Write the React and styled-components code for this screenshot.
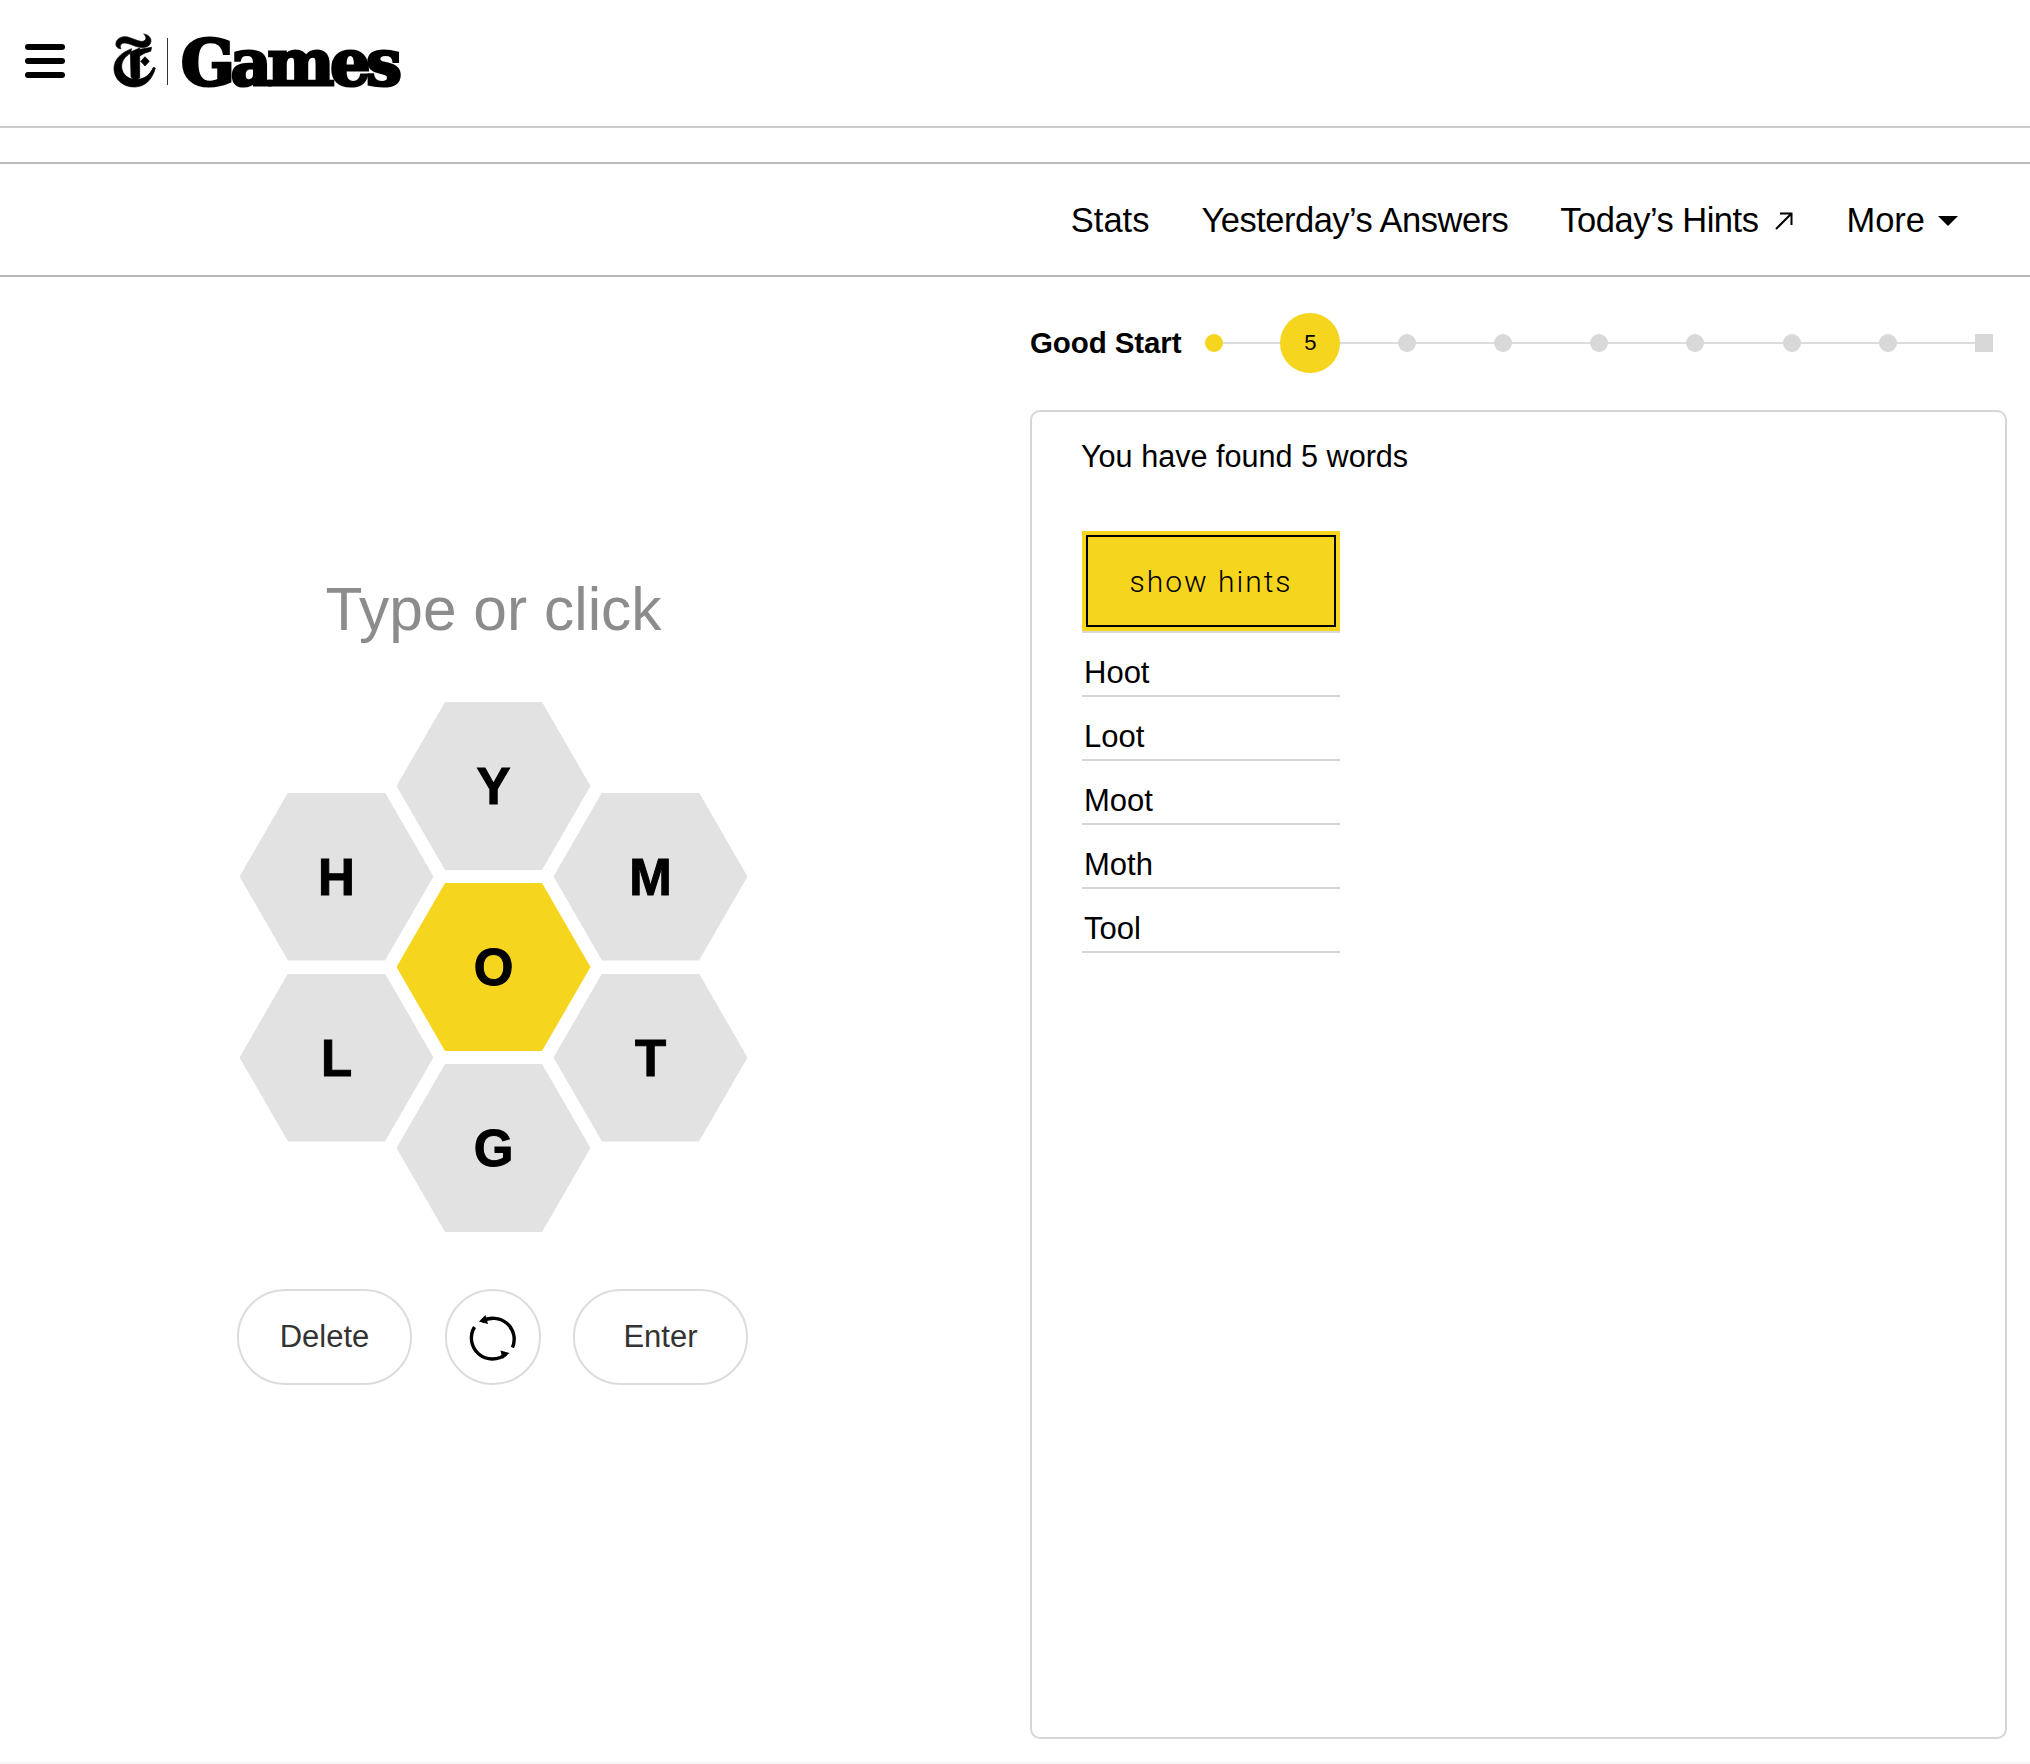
import React from 'react';
import styled, { createGlobalStyle } from 'styled-components';

const Global = createGlobalStyle`
  html, body { margin: 0; padding: 0; background: #fff; overflow: hidden; }
  * { box-sizing: border-box; }
  body { font-family: "Liberation Sans", Arial, sans-serif; color: #000; }
`;
const YELLOW = '#f6d51f';
const Page = styled.div`width: 2030px; height: 1764px; display: flex; flex-direction: column;`;
const Header = styled.header`
  height: 128px; border-bottom: 2px solid #ccc; display: flex; align-items: flex-start;
  padding: 28px 0 0 25px;
`;
const Logo = styled.svg`margin-left: 40px; flex: none;`;
const Menu = styled.svg`flex: none;`;
const Wordmark = styled.span`
  margin-left: 11px; font-family: "DejaVu Serif", serif; font-weight: 700; font-size: 63px; line-height: 65px;
  letter-spacing: -4px; -webkit-text-stroke: 3.2px #000; position: relative; top: 3px;
`;
const SubBar = styled.div`height: 36px; border-bottom: 2px solid #bbb;`;
const Nav = styled.nav`
  height: 113px; border-bottom: 2px solid #b8b8b8; display: flex; justify-content: flex-end; align-items: center;
  gap: 52px; padding: 2px 72px 0 0; font-size: 34.5px;
`;
const NavItem = styled.a`
  display: flex; align-items: center; gap: ${p => p.$gap || 0}px; color: #000; white-space: nowrap;
  letter-spacing: ${p => (p.$tight ? '-0.5px' : '0')};
  margin-left: ${p => p.$push || 0}px;
`;
const Main = styled.main`flex: 1; display: flex; min-height: 0;`;
const GameCol = styled.section`width: 987px; flex: none; display: flex; flex-direction: column; align-items: center; padding-top: 297px;`;
const Title = styled.div`font-size: 60.5px; line-height: 70px; color: #8c8c8c; margin-bottom: 58px;`;
const Hive = styled.div`display: flex; align-items: flex-start;`;
const HiveCol = styled.div`
  display: flex; flex-direction: column; gap: 13px; width: 194px; flex: none;
  padding-top: ${p => p.$offset || 0}px;
  & + & { margin-left: -37px; }
`;
const Hex = styled.div`
  width: 194px; height: 168px; display: flex; align-items: center; justify-content: center; padding-top: 1px;
  clip-path: polygon(25% 0, 75% 0, 100% 50%, 75% 100%, 25% 100%, 0 50%);
  background: ${p => (p.$center ? YELLOW : '#e2e2e2')}; font-weight: 700; font-size: 51px; line-height: 1;
  -webkit-text-stroke: 1px #000;
`;
const Controls = styled.div`display: flex; gap: 32.5px; margin-top: 57px; position: relative; left: -1px;`;
const RoundButton = styled.button`
  height: 96px; width: ${p => p.$w}px; border: 2px solid #dcdcdc; border-radius: 48px; background: #fff;
  display: flex; align-items: center; justify-content: center; padding: 0;
  font: 31px "Liberation Sans", Arial, sans-serif; color: #333;
`;
const ShuffleSvg = styled.svg`margin-left: 2px;`;
const SideCol = styled.section`width: 977px; margin-left: 43px; flex: none; padding-top: 36px; display: flex; flex-direction: column;`;
const Progress = styled.div`height: 60px; display: flex; align-items: center;`;
const Rank = styled.div`width: 175px; flex: none; font-weight: 700; font-size: 29.5px; white-space: nowrap; letter-spacing: -0.1px;`;
const Track = styled.div`
  position: relative; width: 788px; display: flex; justify-content: space-between; align-items: center; height: 60px;
  &::before { content: ''; position: absolute; left: 9px; right: 9px; top: 29px; height: 2px; background: #dcdcdc; }
`;
const Step = styled.div`width: 18px; display: flex; justify-content: center; position: relative;`;
const Dot = styled.span`
  width: 18px; height: 18px; flex: none; background: ${p => (p.$on ? YELLOW : '#d8d8d8')};
  border-radius: ${p => (p.$square ? 0 : '50%')};
`;
const Current = styled.span`
  width: 60px; height: 60px; flex: none; border-radius: 50%; background: ${YELLOW};
  display: flex; align-items: center; justify-content: center; font-size: 22px;
`;
const Panel = styled.div`
  margin-top: 37px; height: 1329px; border: 2px solid #d6d6d6; border-radius: 10px; padding: 26px 0 0 50px;
`;
const Found = styled.div`font-size: 30.6px; line-height: 36px; margin: 0 0 57px -1px;`;
const HintButton = styled.button`
  display: block; width: 258px; height: 100px; border: 4px solid ${YELLOW}; background: ${YELLOW};
  box-shadow: inset 0 0 0 2px #000; padding: 0;
  font: 300 30px Roboto, sans-serif; letter-spacing: 2px; color: #000;
`;
const Words = styled.ul`list-style: none; margin: 0; padding: 0; width: 258px; border-top: 2px solid #d8d8d8;`;
const Word = styled.li`
  height: 64px; padding: 22px 0 0 2px; border-bottom: 2px solid #d4d4d4; font-size: 31px; line-height: 36px;
`;
const FootLine = styled.div`height: 2px; background: #f6f6f6; flex: none;`;

const ShuffleIcon = () => (
  <ShuffleSvg width="66" height="60" viewBox="0 0 66 60" fill="none" aria-hidden="true">
    <path d="M21 14.5A21 21 0 0 1 51.5 40.5" stroke="#000" strokeWidth="3.4" />
    <path d="M45 47A21 21 0 0 1 13.5 20" stroke="#000" strokeWidth="3.4" />
    <path d="M18 14.5L24.5 8L27 17Z" fill="#000" />
    <path d="M48.5 46L41.5 52L39.5 43.5Z" fill="#000" />
  </ShuffleSvg>
);

export default function App() {
  return (
    <Page>
      <Global />
      <Header>
        <Menu width="40" height="65" viewBox="0 0 40 65" aria-hidden="true">
          <rect x="0" y="16" width="40" height="6" rx="3" fill="#000" />
          <rect x="0" y="30" width="40" height="6" rx="3" fill="#000" />
          <rect x="0" y="44" width="40" height="6" rx="3" fill="#000" />
        </Menu>
        <Logo width="65" height="65" viewBox="0 0 195 195" aria-hidden="true">
          <g fill="#000" stroke="#000" strokeWidth="2">
            <path d="M33 52C30 35 48 22 68 27C92 34 110 46 120 37C125 31 123 24 116 18C134 20 144 36 134 50C124 62 102 60 84 52C70 46 56 42 49 48C45 52 45 58 48 62C40 62 35 59 33 52Z" />
            <path d="M80 62C48 74 27 94 27 122C27 154 55 178 90 177C120 176 142 155 151 120L145 118C135 140 120 152 100 154C74 157 52 142 50 118C49 100 60 86 76 76Z" />
            <path d="M76 72L104 60L104 150L88 160L78 146Z" />
            <path d="M120 86L133 100L120 114L107 100Z" />
            <path d="M104 64L140 58L137 70L120 75L104 84Z" />
          </g>
          <rect x="186" y="30" width="3" height="141" fill="#333" />
        </Logo>
        <Wordmark>Games</Wordmark>
      </Header>
      <SubBar />
      <Nav>
        <NavItem>Stats</NavItem>
        <NavItem $tight>Yesterday’s Answers</NavItem>
        <NavItem $tight $gap={17}>
          Today’s Hints
          <svg width="18" height="18" viewBox="0 0 18 18" fill="none" stroke="#000" strokeWidth="2" aria-hidden="true">
            <path d="M1 17L16.5 1.5M5 1.5H16.5V13" />
          </svg>
        </NavItem>
        <NavItem $gap={13} $push={1}>
          More
          <svg width="20" height="10" viewBox="0 0 20 10" aria-hidden="true"><path d="M0 0H20L10 10Z" fill="#000" /></svg>
        </NavItem>
      </Nav>
      <Main>
        <GameCol>
          <Title>Type or click</Title>
          <Hive>
            <HiveCol $offset={90.5}><Hex>H</Hex><Hex>L</Hex></HiveCol>
            <HiveCol><Hex>Y</Hex><Hex $center>O</Hex><Hex>G</Hex></HiveCol>
            <HiveCol $offset={90.5}><Hex>M</Hex><Hex>T</Hex></HiveCol>
          </Hive>
          <Controls>
            <RoundButton $w={175}>Delete</RoundButton>
            <RoundButton $w={96}><ShuffleIcon /></RoundButton>
            <RoundButton $w={175}>Enter</RoundButton>
          </Controls>
        </GameCol>
        <SideCol>
          <Progress>
            <Rank>Good Start</Rank>
            <Track>
              <Step><Dot $on /></Step>
              <Step><Current>5</Current></Step>
              {[0, 1, 2, 3, 4, 5].map(i => <Step key={i}><Dot /></Step>)}
              <Step><Dot $square /></Step>
            </Track>
          </Progress>
          <Panel>
            <Found>You have found 5 words</Found>
            <HintButton>show hints</HintButton>
            <Words>
              {['Hoot', 'Loot', 'Moot', 'Moth', 'Tool'].map(w => <Word key={w}>{w}</Word>)}
            </Words>
          </Panel>
        </SideCol>
      </Main>
      <FootLine />
    </Page>
  );
}
